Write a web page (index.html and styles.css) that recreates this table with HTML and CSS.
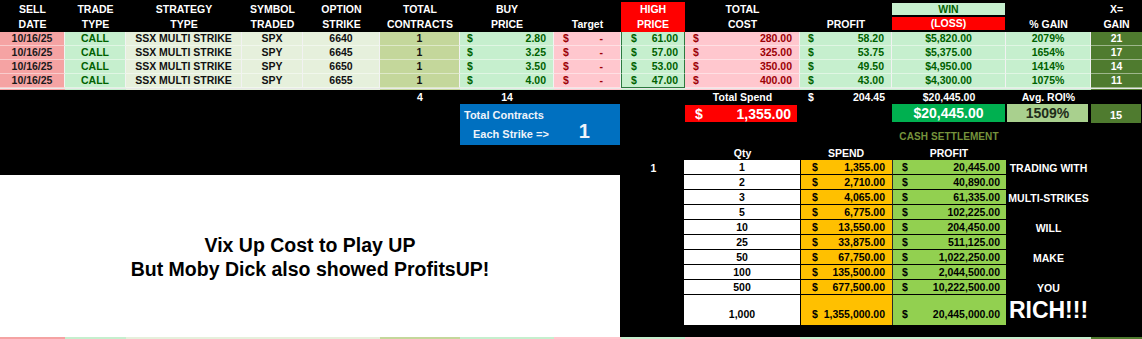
FILE: index.html
```html
<!DOCTYPE html>
<html>
<head>
<meta charset="utf-8">
<title>SSX Multi Strike</title>
<link rel="stylesheet" href="styles.css">
</head>
<body>
<div class="sheet">
  <div class="grid hdr">
    <div class="h">SELL<br>DATE</div>
    <div class="h">TRADE<br>TYPE</div>
    <div class="h">STRATEGY<br>TYPE</div>
    <div class="h">SYMBOL<br>TRADED</div>
    <div class="h">OPTION<br>STRIKE</div>
    <div class="h">TOTAL<br>CONTRACTS</div>
    <div class="h">BUY<br>PRICE</div>
    <div class="h">&nbsp;<br>Target</div>
    <div class="h high">HIGH<br>PRICE</div>
    <div class="h">TOTAL<br>COST</div>
    <div class="h">&nbsp;<br>PROFIT</div>
    <div class="h wl"><span class="win">WIN</span><span class="loss">(LOSS)</span></div>
    <div class="h">&nbsp;<br>% GAIN</div>
    <div class="h">X=<br>GAIN</div>
  </div>

  <div class="grid row">
    <div class="c date">10/16/25</div>
    <div class="c call">CALL</div>
    <div class="c lt">SSX MULTI STRIKE</div>
    <div class="c lt">SPX</div>
    <div class="c lt">6640</div>
    <div class="c tc">1</div>
    <div class="c gr acc buy"><span>$</span><span>2.80</span></div>
    <div class="c rd acc tgt"><span>$</span><span>-</span></div>
    <div class="c gr acc hi"><span>$</span><span>61.00</span></div>
    <div class="c rd acc cost"><span>$</span><span>280.00</span></div>
    <div class="c gr acc prof"><span>$</span><span>58.20</span></div>
    <div class="c gr">$5,820.00</div>
    <div class="c gr">2079%</div>
    <div class="c x">21</div>
  </div>
  <div class="grid row">
    <div class="c date">10/16/25</div>
    <div class="c call">CALL</div>
    <div class="c lt">SSX MULTI STRIKE</div>
    <div class="c lt">SPY</div>
    <div class="c lt">6645</div>
    <div class="c tc">1</div>
    <div class="c gr acc buy"><span>$</span><span>3.25</span></div>
    <div class="c rd acc tgt"><span>$</span><span>-</span></div>
    <div class="c gr acc hi"><span>$</span><span>57.00</span></div>
    <div class="c rd acc cost"><span>$</span><span>325.00</span></div>
    <div class="c gr acc prof"><span>$</span><span>53.75</span></div>
    <div class="c gr">$5,375.00</div>
    <div class="c gr">1654%</div>
    <div class="c x">17</div>
  </div>
  <div class="grid row">
    <div class="c date">10/16/25</div>
    <div class="c call">CALL</div>
    <div class="c lt">SSX MULTI STRIKE</div>
    <div class="c lt">SPY</div>
    <div class="c lt">6650</div>
    <div class="c tc">1</div>
    <div class="c gr acc buy"><span>$</span><span>3.50</span></div>
    <div class="c rd acc tgt"><span>$</span><span>-</span></div>
    <div class="c gr acc hi"><span>$</span><span>53.00</span></div>
    <div class="c rd acc cost"><span>$</span><span>350.00</span></div>
    <div class="c gr acc prof"><span>$</span><span>49.50</span></div>
    <div class="c gr">$4,950.00</div>
    <div class="c gr">1414%</div>
    <div class="c x">14</div>
  </div>
  <div class="grid row">
    <div class="c date">10/16/25</div>
    <div class="c call">CALL</div>
    <div class="c lt">SSX MULTI STRIKE</div>
    <div class="c lt">SPY</div>
    <div class="c lt">6655</div>
    <div class="c tc">1</div>
    <div class="c gr acc buy"><span>$</span><span>4.00</span></div>
    <div class="c rd acc tgt"><span>$</span><span>-</span></div>
    <div class="c gr acc hi hilast"><span>$</span><span>47.00</span></div>
    <div class="c rd acc cost"><span>$</span><span>400.00</span></div>
    <div class="c gr acc prof"><span>$</span><span>43.00</span></div>
    <div class="c gr">$4,300.00</div>
    <div class="c gr">1075%</div>
    <div class="c x">11</div>
  </div>

  <div class="grid strip">
    <div class="date"></div><div class="call"></div><div class="lt"></div><div class="lt"></div><div class="lt"></div><div class="tc"></div><div class="gr"></div><div class="rd"></div><div class="gr"></div><div class="rd"></div><div class="gr"></div><div class="gr"></div><div class="gr"></div><div class="x"></div>
  </div>

  <div class="grid totals">
    <div></div><div></div><div></div><div></div><div></div>
    <div class="t">4</div>
    <div class="t">14</div>
    <div></div><div></div>
    <div class="t">Total Spend</div>
    <div class="t acc prof"><span>$</span><span>204.45</span></div>
    <div class="t">$20,445.00</div>
    <div class="t">Avg. ROI%</div>
    <div></div>
  </div>

  <div class="grid lower">
    <div class="blue">
      <div class="bl1">Total Contracts</div>
      <div class="bl2"><span>Each Strike =&gt;</span><span class="big1">1</span></div>
    </div>
    <div class="spendbox"><span>$</span><span>1,355.00</span></div>
    <div class="winbox">$20,445.00</div>
    <div class="roibox">1509%</div>
    <div class="xbox">15</div>
    <div class="cash">CASH SETTLEMENT</div>
    <div class="one">1</div>

    <div class="settle">
      <div class="sh">Qty</div><div class="sh">SPEND</div><div class="sh">PROFIT</div><div></div>

      <div class="q">1</div><div class="sp"><span>$</span><span>1,355.00</span></div><div class="pr"><span>$</span><span>20,445.00</span></div><div class="side">TRADING WITH</div>
      <div class="q">2</div><div class="sp"><span>$</span><span>2,710.00</span></div><div class="pr"><span>$</span><span>40,890.00</span></div><div class="side"></div>
      <div class="q">3</div><div class="sp"><span>$</span><span>4,065.00</span></div><div class="pr"><span>$</span><span>61,335.00</span></div><div class="side">MULTI-STRIKES</div>
      <div class="q">5</div><div class="sp"><span>$</span><span>6,775.00</span></div><div class="pr"><span>$</span><span>102,225.00</span></div><div class="side"></div>
      <div class="q">10</div><div class="sp"><span>$</span><span>13,550.00</span></div><div class="pr"><span>$</span><span>204,450.00</span></div><div class="side">WILL</div>
      <div class="q">25</div><div class="sp"><span>$</span><span>33,875.00</span></div><div class="pr"><span>$</span><span>511,125.00</span></div><div class="side"></div>
      <div class="q">50</div><div class="sp"><span>$</span><span>67,750.00</span></div><div class="pr"><span>$</span><span>1,022,250.00</span></div><div class="side">MAKE</div>
      <div class="q">100</div><div class="sp"><span>$</span><span>135,500.00</span></div><div class="pr"><span>$</span><span>2,044,500.00</span></div><div class="side"></div>
      <div class="q">500</div><div class="sp"><span>$</span><span>677,500.00</span></div><div class="pr"><span>$</span><span>10,222,500.00</span></div><div class="side">YOU</div>
      <div class="q last">1,000</div><div class="sp last"><span>$</span><span>1,355,000.00</span></div><div class="pr last"><span>$</span><span>20,445,000.00</span></div><div class="side rich">RICH!!!</div>
    </div>

    <div class="note">
      <p>Vix Up Cost to Play UP</p>
      <p>But Moby Dick also showed ProfitsUP!</p>
    </div>
  </div>

  <div class="grid strip strip2">
    <div class="date"></div><div class="call"></div><div class="lt"></div><div class="lt"></div><div class="lt"></div><div class="tc"></div><div class="gr"></div><div class="rd"></div><div class="gr"></div><div class="rd"></div><div class="gr"></div><div class="gr"></div><div class="gr"></div><div class="x"></div>
  </div>
</div>
</body>
</html>
```

FILE: styles.css
```css
* { box-sizing: border-box; margin: 0; padding: 0; }

body {
  background: #000;
  font-family: "Liberation Sans", Arial, sans-serif;
  font-weight: bold;
  font-size: 10.5px;
  color: #fff;
  width: 1142px;
  height: 339px;
  overflow: hidden;
}

.sheet { width: 1142px; }

.grid {
  display: grid;
  grid-template-columns: 65px 61px 116px 61px 77px 80px 94px 67px 64px 115px 92px 114px 85px 51px;
}

/* header */
.hdr { height: 32px; }
.h {
  display: flex;
  flex-direction: column;
  justify-content: center;
  align-items: center;
  text-align: center;
  line-height: 15px;
  white-space: nowrap;
}
.high { background: #ff0000; margin: 2px 0; }
.wl { justify-content: flex-start; align-items: stretch; padding-right: 1px; }
.win {
  margin-top: 3px; height: 12px; line-height: 12px;
  background: #c6efce; color: #006100;
}
.loss {
  margin-top: 2px; height: 13px; line-height: 13px;
  background: #ff0000; color: #fff;
}

/* data rows */
.row { height: 14px; }
.c {
  display: flex;
  align-items: center;
  justify-content: center;
  line-height: 13px;
  white-space: nowrap;
  border-right: 1px solid #f2f2f2;
  border-bottom: 1px solid rgba(255, 255, 255, 0.45);
  color: #111;
}
.date { background: #f5a3a3; color: #1a1a1a; }
.call { background: #c6efce; color: #006100; }
.lt { background: #e6f0dc; }
.tc { background: #c4d79b; }
.gr { background: #c6efce; color: #006100; }
.rd { background: #ffc7ce; color: #9c0006; }
.x { background: #4f7b2f; color: #fff; border-right: none; }

.acc { justify-content: space-between; }
.buy { padding: 0 7px; }
.tgt { padding: 0 17px 0 9px; }
.hi {
  padding: 0 6px 0 9px;
  border-left: 1px solid #2b7a3f;
  border-right: 1px solid #2b7a3f;
}
.hilast { border-bottom: 1px solid #2b7a3f; }
.cost { padding: 0 7px 0 8px; }
.prof { padding: 0 7px 0 8px; }

.strip { height: 2px; border-top: 1px solid #e8e8e8; }
.strip2 { border-top: none; }

/* totals row */
.totals { height: 14px; }
.t {
  display: flex;
  align-items: center;
  justify-content: center;
  line-height: 14px;
  white-space: nowrap;
  color: #fff;
}
.t.acc { justify-content: space-between; }

/* lower area */
.lower {
  grid-template-rows: 19px 23px 14px repeat(9, 15px) 30px 12px;
}

.blue {
  grid-column: 7 / 9;
  grid-row: 1 / 3;
  margin: 0 1px 1px 0;
  background: #0070c0;
  color: #eef3fa;
  font-size: 11px;
  padding: 5px 0 2px 4px;
  display: flex;
  flex-direction: column;
}
.bl1 { height: 12px; line-height: 12px; }
.bl2 {
  margin-top: auto;
  display: flex;
  align-items: baseline;
  padding-left: 9px;
  line-height: 20px;
}
.big1 { font-size: 20px; margin-left: 30px; }

.spendbox {
  grid-column: 10;
  grid-row: 1;
  margin: 1px 3px 1px 0;
  background: #ff0000;
  color: #fff;
  font-size: 14px;
  display: flex;
  align-items: center;
  justify-content: space-between;
  padding: 0 6px 0 10px;
}
.winbox {
  grid-column: 12;
  grid-row: 1;
  margin: 0 1px 1px 0;
  background: #00b050;
  color: #fff;
  font-size: 14px;
  display: flex;
  align-items: center;
  justify-content: center;
}
.roibox {
  grid-column: 13;
  grid-row: 1;
  margin: 0 3px 1px 1px;
  background: #a9d08e;
  color: #1f2d1a;
  font-size: 14px;
  display: flex;
  align-items: center;
  justify-content: center;
}
.xbox {
  grid-column: 14;
  grid-row: 1;
  margin: 0 1px 0 0;
  background: #4f7b2f;
  color: #fff;
  font-size: 11px;
  display: flex;
  align-items: center;
  justify-content: center;
  padding-top: 2px;
}
.cash {
  grid-column: 12;
  grid-row: 2;
  display: flex;
  align-items: flex-end;
  justify-content: center;
  padding-bottom: 3px;
  line-height: 13px;
  white-space: nowrap;
  color: #76933c;
  font-size: 10px;
  letter-spacing: 0.1px;
}
.one {
  grid-column: 9;
  grid-row: 4;
  display: flex;
  align-items: center;
  justify-content: center;
  padding-left: 1px;
}

.settle {
  grid-column: 10 / 14;
  grid-row: 3 / 14;
  display: grid;
  grid-template-columns: 115px 92px 114px 85px;
  grid-template-rows: 14px repeat(9, 15px) 30px;
}
.sh {
  display: flex;
  align-items: center;
  justify-content: center;
}
.q, .sp, .pr {
  display: flex;
  align-items: center;
  border-bottom: 1px solid #000;
  color: #000;
  white-space: nowrap;
}
.q { background: #fff; justify-content: center; margin-left: -1px; }
.sp {
  background: #ffc000;
  justify-content: space-between;
  padding: 0 7px 0 11px;
  border-left: 1px solid #000;
}
.pr {
  background: #92d050;
  justify-content: space-between;
  padding: 0 6px 0 9px;
  border-left: 1px solid #2a2a2a;
}
.last { align-items: flex-end; padding-bottom: 5px; border-bottom: none; }
.side {
  display: flex;
  align-items: center;
  justify-content: center;
  white-space: nowrap;
  color: #fff;
  font-size: 10.5px;
}
.rich { font-size: 23px; }

.note {
  grid-column: 1 / 9;
  grid-row: 5 / 15;
  margin-right: 1px;
  background: #fff;
  color: #000;
  font-size: 19.5px;
  line-height: 24px;
  display: flex;
  flex-direction: column;
  align-items: center;
  justify-content: center;
  padding-top: 2px;
}
```
